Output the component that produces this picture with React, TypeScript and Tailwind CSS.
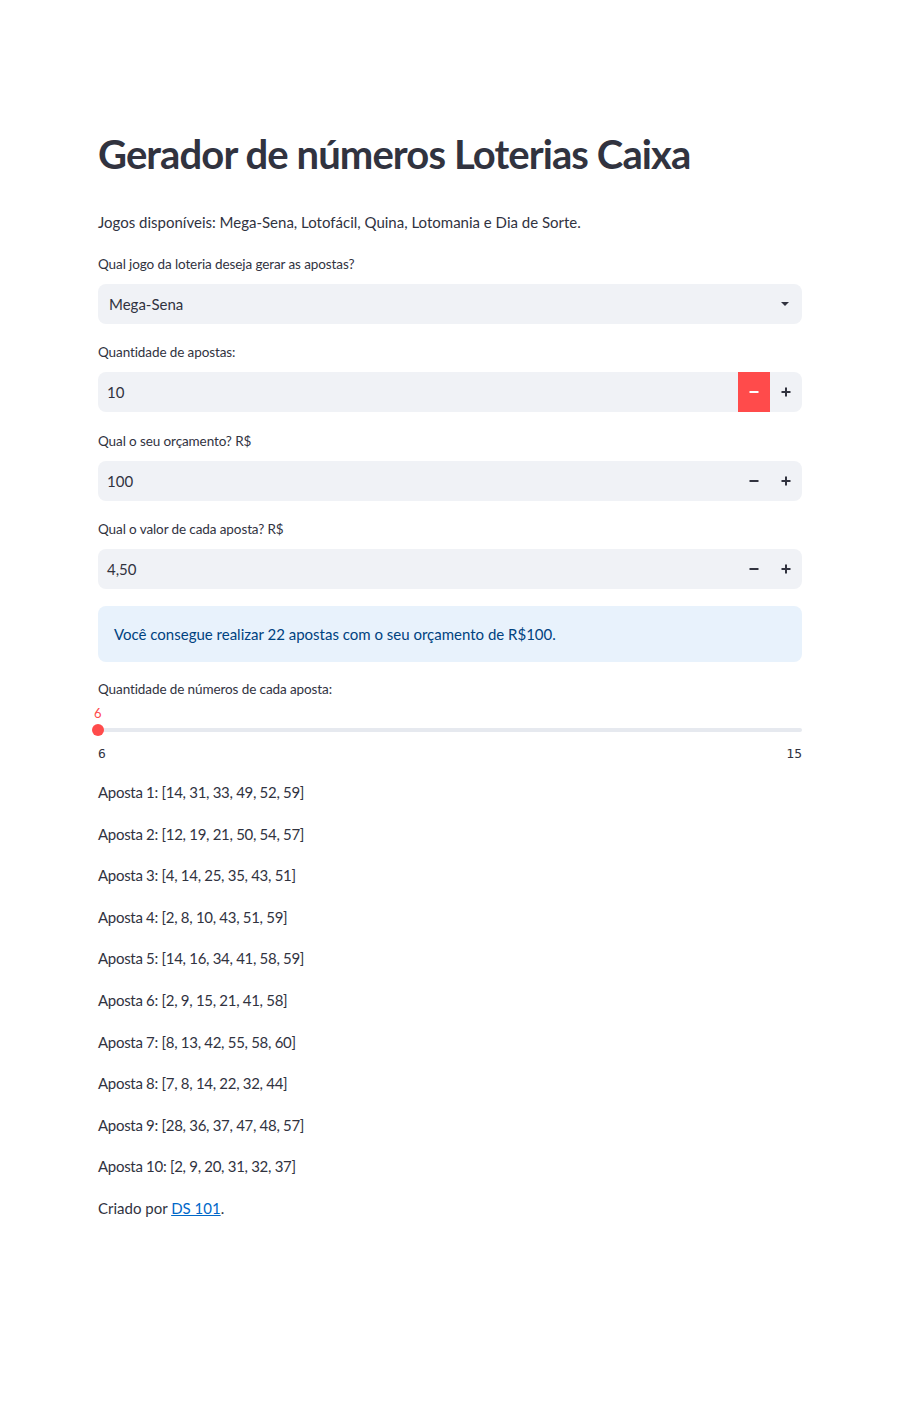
import React from "react";

const apostas = [
  "[14, 31, 33, 49, 52, 59]",
  "[12, 19, 21, 50, 54, 57]",
  "[4, 14, 25, 35, 43, 51]",
  "[2, 8, 10, 43, 51, 59]",
  "[14, 16, 34, 41, 58, 59]",
  "[2, 9, 15, 21, 41, 58]",
  "[8, 13, 42, 55, 58, 60]",
  "[7, 8, 14, 22, 32, 44]",
  "[28, 36, 37, 47, 48, 57]",
  "[2, 9, 20, 31, 32, 37]",
];

function Label({ children }: { children: React.ReactNode }) {
  return (
    <div className="h-[20px] flex items-center text-[13.5px] tracking-[-0.1px] text-[#31333F] mb-[10px]">
      {children}
    </div>
  );
}

function Minus() {
  return (
    <svg width="10" height="10" viewBox="0 0 10 10">
      <rect x="0.5" y="4" width="9" height="2" fill="currentColor" />
    </svg>
  );
}
function Plus() {
  return (
    <svg width="10" height="10" viewBox="0 0 10 10">
      <rect x="0.5" y="4" width="9" height="2" fill="currentColor" />
      <rect x="4" y="0.5" width="2" height="9" fill="currentColor" />
    </svg>
  );
}

function NumberInput({ value, active }: { value: string; active?: boolean }) {
  return (
    <div className="h-[40px] flex bg-[#F0F2F6] rounded-[8px] overflow-hidden">
      <div className="flex-1 flex items-center pl-[9px] text-[15px] text-[#31333F]">{value}</div>
      <div
        className={
          active
            ? "w-[32px] flex items-center justify-center bg-[#FF4B4B] text-white"
            : "w-[32px] flex items-center justify-center text-[#31333F]"
        }
      >
        <Minus />
      </div>
      <div className="w-[32px] flex items-center justify-center text-[#31333F]">
        <Plus />
      </div>
    </div>
  );
}

export default function App() {
  return (
    <div
      className="min-h-[1420px] bg-white text-[#31333F]"
      style={{ fontFamily: '"Lato", "Noto Sans", sans-serif' }}
    >
      <div className="ml-[98px] w-[704px] pt-[128px] flex flex-col">
        <h1 className="text-[40px] font-bold leading-[53px] tracking-[-0.9px] text-[#31333F]">
          Gerador de números Loterias Caixa
        </h1>
        <p className="mt-[28px] text-[15px] leading-[26px]">
          Jogos disponíveis: Mega-Sena, Lotofácil, Quina, Lotomania e Dia de Sorte.
        </p>
        <div className="mt-[19px]">
          <Label>Qual jogo da loteria deseja gerar as apostas?</Label>
          <div className="h-[40px] flex items-center justify-between bg-[#F0F2F6] rounded-[8px] pl-[11px] pr-[12px] text-[15px]">
            <span>Mega-Sena</span>
            <svg width="10" height="6" viewBox="0 0 10 6">
              <path d="M1 1h8L5 5z" fill="#31333F" />
            </svg>
          </div>
        </div>
        <div className="mt-[18px]">
          <Label>Quantidade de apostas:</Label>
          <NumberInput value="10" active />
        </div>
        <div className="mt-[19px]">
          <Label>Qual o seu orçamento? R$</Label>
          <NumberInput value="100" />
        </div>
        <div className="mt-[18px]">
          <Label>Qual o valor de cada aposta? R$</Label>
          <NumberInput value="4,50" />
        </div>
        <div className="mt-[17px] h-[56px] rounded-[8px] bg-[#E8F2FC] flex items-center px-[16px] text-[15px] text-[#004280]">
          Você consegue realizar 22 apostas com o seu orçamento de R$100.
        </div>
        <div className="mt-[17px]">
          <Label>Quantidade de números de cada aposta:</Label>
          <div className="relative h-[58px]">
            <div className="absolute left-[-4px] top-[-4px] text-[13px] leading-[16px] text-[#FF4B4B]">6</div>
            <div className="absolute left-0 right-0 top-[19px] h-[4px] rounded-full bg-[#E6E9EF]" />
            <div className="absolute left-[-6px] top-[15px] w-[12px] h-[12px] rounded-full bg-[#FF4B4B]" />
            <div
              className="absolute left-0 right-0 top-[37px] flex justify-between text-[13px] leading-[16px] text-[#31333F]"
              style={{ fontFamily: '"DejaVu Sans Mono", "Liberation Mono", monospace' }}
            >
              <span>6</span>
              <span>15</span>
            </div>
          </div>
        </div>
        <div className="mt-[13px] flex flex-col gap-[16px] text-[15px] leading-[25.6px]">
          {apostas.map((a, i) => (
            <p key={i} className="tracking-[-0.3px]">
              Aposta {i + 1}: {a}
            </p>
          ))}
          <p>
            Criado por{" "}
            <a href="#" className="text-[#0068C9] underline">
              DS 101
            </a>
            .
          </p>
        </div>
      </div>
    </div>
  );
}
